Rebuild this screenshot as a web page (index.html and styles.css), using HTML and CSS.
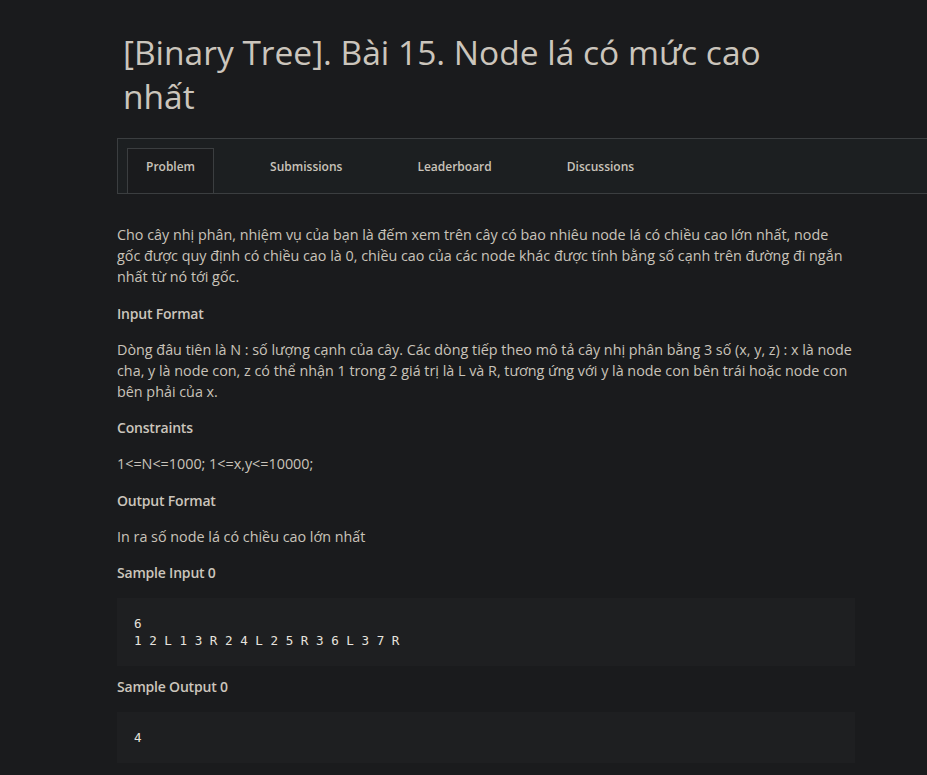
FILE: index.html
```html
<!DOCTYPE html>
<html lang="vi">
<head>
<meta charset="utf-8">
<title>[Binary Tree]. Bài 15. Node lá có mức cao nhất</title>
<link rel="stylesheet" href="styles.css">
</head>
<body>
<div class="page">
  <h1 class="title">[Binary Tree]. Bài 15. Node lá có mức cao nhất</h1>
  <nav class="tabs">
    <a class="tab active">Problem</a>
    <a class="tab">Submissions</a>
    <a class="tab">Leaderboard</a>
    <a class="tab">Discussions</a>
  </nav>
  <div class="content">
    <p>Cho cây nhị phân, nhiệm vụ của bạn là đếm xem trên cây có bao nhiêu node lá có chiều cao lớn nhất, node gốc được quy định có chiều cao là 0, chiều cao của các node khác được tính bằng số cạnh trên đường đi ngắn nhất từ nó tới gốc.</p>
    <h3>Input Format</h3>
    <p>Dòng đâu tiên là N : số lượng cạnh của cây. Các dòng tiếp theo mô tả cây nhị phân bằng 3 số (x, y, z) : x là node cha, y là node con, z có thể nhận 1 trong 2 giá trị là L và R, tương ứng với y là node con bên trái hoặc node con bên phải của x.</p>
    <h3>Constraints</h3>
    <p>1&lt;=N&lt;=1000; 1&lt;=x,y&lt;=10000;</p>
    <h3>Output Format</h3>
    <p>In ra số node lá có chiều cao lớn nhất</p>
    <h3>Sample Input 0</h3>
    <pre class="code">6
1 2 L 1 3 R 2 4 L 2 5 R 3 6 L 3 7 R</pre>
    <h3>Sample Output 0</h3>
    <pre class="code">4</pre>
  </div>
</div>
</body>
</html>
```
FILE: styles.css
```css
html, body {
  margin: 0;
  padding: 0;
  background: #1a1b1d;
  overflow: hidden;
}
body {
  font-family: "Open Sans", "Noto Sans", sans-serif;
  color: #c9c3ba;
}
.page {
  padding-left: 117px;
  width: 850px;
}
.title {
  margin: 30px 0 20px 6px;
  font-size: 33.5px;
  font-weight: 500;
  line-height: 44px;
  color: #cbc5bc;
  width: 700px;
}
.tabs {
  display: flex;
  gap: 37px;
  height: 45px;
  padding: 9px 0 0 9px;
  background: #1c1f21;
  border: 1px solid #3b3e40;
}
.tab {
  display: flex;
  align-items: center;
  padding: 0 18px 9px;
  margin-bottom: -1px;
  font-size: 12px;
  font-weight: 600;
  color: #c9c3ba;
  border: 1px solid transparent;
}
.tab.active {
  background: #1a1b1d;
  border-color: #3b3e40;
}
.content {
  width: 738px;
  padding-top: 30px;
  font-size: 14.35px;
  line-height: 21px;
}
.content p {
  margin: 0 0 15.5px;
}
.content h3 {
  margin: 0 0 15px;
  font-size: 14px;
  line-height: 21px;
  font-weight: 600;
  letter-spacing: -0.2px;
  color: #cbc5bc;
}
.code {
  margin: 0 0 10px;
  padding: 17px;
  background: #1e1f21;
  font-family: "DejaVu Sans Mono", "Liberation Mono", monospace;
  font-size: 12.6px;
  line-height: 17px;
  color: #e6e3de;
}
```
